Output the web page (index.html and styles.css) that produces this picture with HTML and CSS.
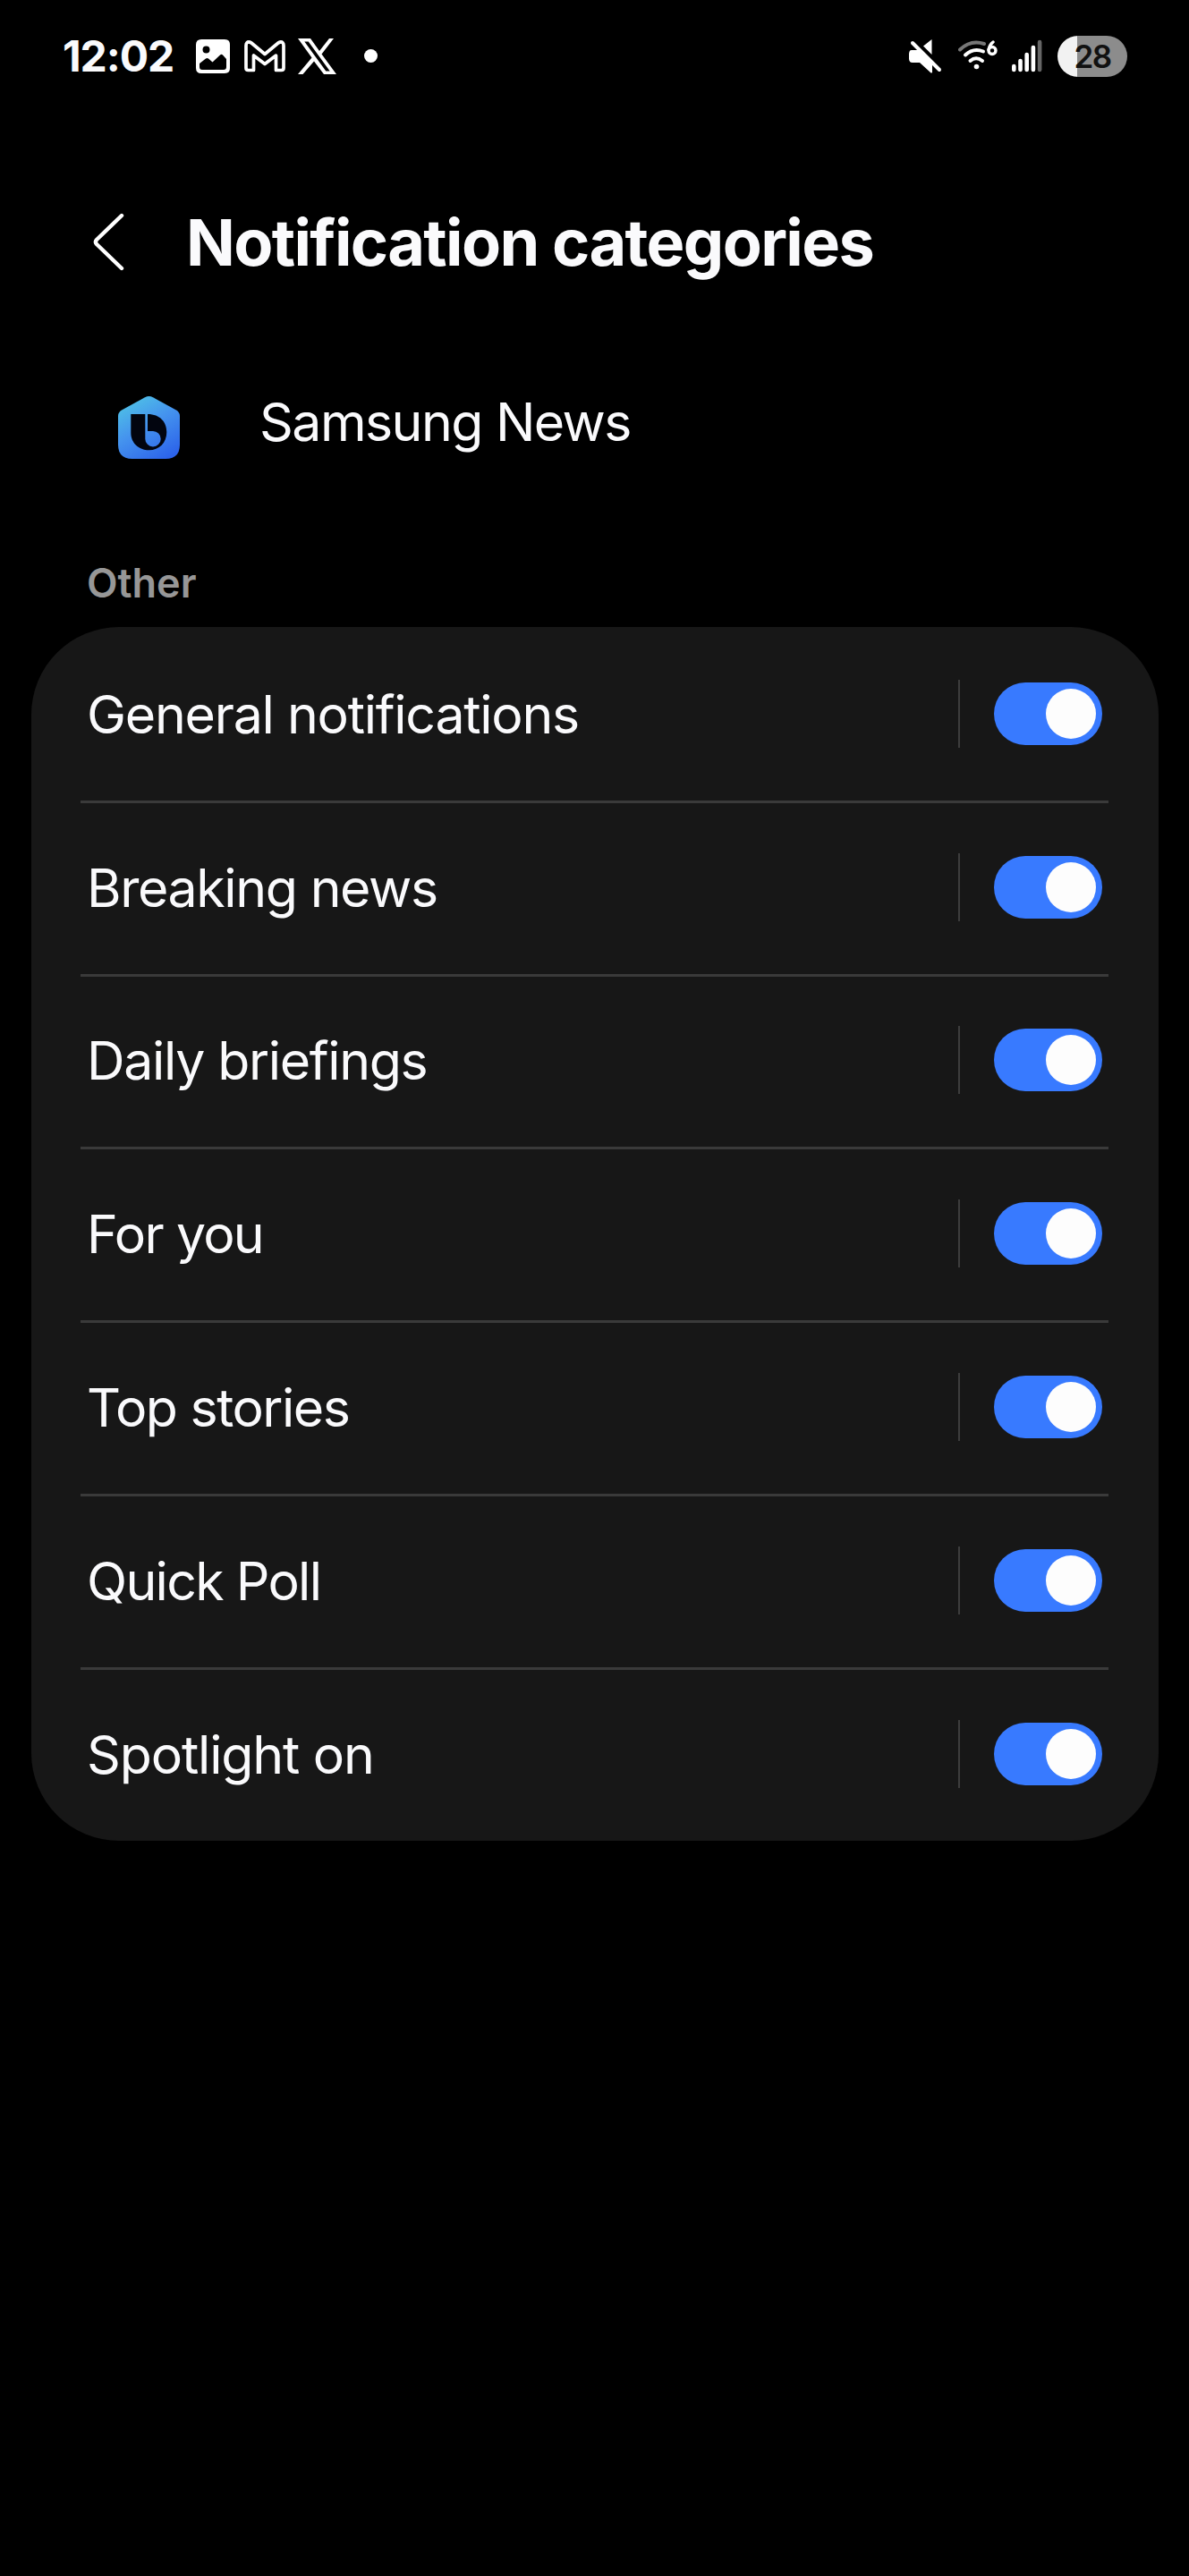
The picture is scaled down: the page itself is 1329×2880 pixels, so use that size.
FILE: index.html
```html
<!DOCTYPE html>
<html lang="en">
<head>
<meta charset="utf-8">
<title>Notification categories</title>
<link rel="stylesheet" href="styles.css">
</head>
<body>
<header class="status">
  <span class="clock">12:02</span>
  <svg class="ic-photo" width="38" height="38" viewBox="0 0 38 38"><path fill="#fff" fill-rule="evenodd" d="M6 0H32Q38 0 38 6V32Q38 38 32 38H6Q0 38 0 32V6Q0 0 6 0ZM11.500 7.500A4 4 0 1 0 11.500 15.500A4 4 0 1 0 11.500 7.500ZM4 27V31Q4 34 7 34H31Q34 34 34 31V22L30 17.500Q28.500 16 27 17.500L18.500 25.500L14 21.500Q12.500 20.500 11 21.500Z"/></svg>
  <svg class="ic-mail" width="46" height="36" viewBox="0 0 46 36"><path fill="none" stroke="#fff" stroke-width="3.700" stroke-linejoin="round" d="M2 6Q2 1.500 6 2L8 3L23 15.500L38 3L40 2Q44 1.500 44 6V31Q44 33.500 41.500 33.500H35.500V17L23 26.500L10.500 17V33.500H4.500Q2 33.500 2 31Z"/></svg>
  <svg class="ic-x" width="43" height="40" viewBox="0 0 43 40"><path fill="#fff" fill-rule="evenodd" d="M0 0H14L24 14L35 0H40L26.500 17.500L43 40H29L18 25.500L5.500 40H0L15.500 21.500ZM7.300 3.600L31.300 36.400H35.700L11.700 3.600Z"/></svg>
  <span class="dot"></span>
  <span class="fill"></span>
  <svg class="ic-mute" width="38" height="38" viewBox="0 0 38 38"><path fill="#fff" d="M25.500 0V17L16 7.500Z"/><path fill="#fff" d="M3 12H10L26 28V37Q25 38 24 37L12 26H4Q0 26 0 22V16Q0 12 3 12Z"/><path stroke="#fff" stroke-width="4" stroke-linecap="round" d="M4 4L34 34"/></svg>
  <svg class="ic-wifi" width="46" height="36" viewBox="0 0 46 36"><g fill="none" stroke="#fff" stroke-width="4" stroke-linecap="round"><path stroke="#777" d="M2 10.500Q14 -1 29 4"/><path d="M8 16.500Q17 8 28 12.500"/><path d="M13.500 23Q20 17.500 27 23"/></g><circle cx="20.500" cy="29.500" r="2.800" fill="#fff"/><circle cx="38" cy="11.500" r="4" fill="none" stroke="#fff" stroke-width="3.400"/><path d="M34 10.500Q35 5 39 2" fill="none" stroke="#fff" stroke-width="3.400" stroke-linecap="round"/></svg>
  <svg class="ic-signal" width="34" height="37" viewBox="0 0 34 37"><g stroke="#fff" stroke-width="4.600" stroke-linecap="round"><path d="M2.300 30V34M9.500 24V34M16.700 17V34M23.900 9V34"/><path stroke="#666" d="M31.100 3V34"/></g></svg>
  <span class="battery">28</span>
</header>
<main>
  <div class="title-bar">
    <svg class="back" width="36" height="66" viewBox="0 0 36 66"><path fill="none" stroke="#fff" stroke-width="4.400" stroke-linecap="round" stroke-linejoin="round" d="M32 3L4 30Q1.800 32.500 4 35L32 62"/></svg>
    <h1>Notification categories</h1>
  </div>
  <div class="app">
    <svg class="app-icon" width="69" height="70" viewBox="0 0 69 70"><defs><linearGradient id="g" x1="0.200" y1="0" x2="0.800" y2="1"><stop offset="0" stop-color="#4fc3e6"/><stop offset=".45" stop-color="#4594ee"/><stop offset="1" stop-color="#2c63ea"/></linearGradient></defs><path fill="url(#g)" d="M30 1.200Q34.500 -1 39 1.200L65 15.500Q69 18 69 22V54Q69 70 53 70H16Q0 70 0 54V22Q0 18 4 15.500Z"/><path fill="#02050f" d="M14.300 20H30.300V47.700A8.700 8.700 0 1 0 39 39H33V20C47 20 54.300 29 54.300 40C54.300 52 46 60.300 34.500 60.300C23 60.300 14.300 52 14.300 41Z"/></svg>
    <span class="app-name">Samsung News</span>
  </div>
  <h2>Other</h2>
  <ul class="card">
    <li><span class="label general">General notifications</span><span class="split"></span><span class="toggle"></span></li>
    <li><span class="label breaking">Breaking news</span><span class="split"></span><span class="toggle"></span></li>
    <li><span class="label daily">Daily briefings</span><span class="split"></span><span class="toggle"></span></li>
    <li><span class="label foryou">For you</span><span class="split"></span><span class="toggle"></span></li>
    <li><span class="label top">Top stories</span><span class="split"></span><span class="toggle"></span></li>
    <li><span class="label poll">Quick Poll</span><span class="split"></span><span class="toggle"></span></li>
    <li><span class="label spotlight">Spotlight on</span><span class="split"></span><span class="toggle"></span></li>
  </ul>
</main>
</body>
</html>
```
FILE: styles.css
```css
* { box-sizing: border-box; }
body { margin: 0; min-height: 2880px; background: #000; color: #fafafc; font-family: Inter, "Noto Sans", sans-serif; }
svg { display: block; flex: none; }
.status { display: flex; align-items: center; height: 125px; padding: 0 69px 0 70px; }
.clock { width: 149px; font-size: 48px; font-weight: 700; letter-spacing: -1.1px; white-space: nowrap; }
.ic-mail { margin-left: 16px; }
.ic-x { margin-left: 14px; }
.dot { width: 15px; height: 15px; margin-left: 31px; border-radius: 50%; background: #fff; }
.fill { flex: 1; }
.ic-wifi { margin: 0 14px 0 17px; }
.ic-signal { margin-right: 17px; }
.battery { width: 78px; height: 46px; border-radius: 23px; background: linear-gradient(90deg, #f2f2f2 22px, #8c8c8c 22px); color: #111; font-size: 35px; font-weight: 600; letter-spacing: -1.5px; line-height: 46px; text-align: center; }
.title-bar { display: flex; align-items: center; height: 90px; margin-top: 101px; padding-left: 104px; }
.back { margin-top: -1px; }
h1 { margin: 0 0 0 68px; font-size: 72px; line-height: 90px; font-weight: 700; letter-spacing: -1.65px; white-space: nowrap; }
.app { display: flex; align-items: center; height: 80px; margin-top: 122px; padding-left: 132px; }
.app-name { margin: -13px 0 0 89px; font-size: 59px; letter-spacing: -1.55px; }
h2 { margin: 104px 0 0 97px; height: 60px; line-height: 60px; font-size: 45px; font-weight: 600; color: #979797; }
.card { margin: 16px 34px 0 35px; padding: 0; list-style: none; background: #171717; border-radius: 98px; height: 1356.6px; }
h2 + .card { margin-top: 19px; }
.card li { display: flex; align-items: center; height: 193.8px; margin: 0 56px 0 55px; padding: 0 7px 0 7px; }
.card li + li { background: linear-gradient(#3a3a3a, #3a3a3a) 0 0 / 100% 3px no-repeat; }
.label { flex: 1; padding-top: 2px; font-size: 59px; line-height: 72px; letter-spacing: -1.25px; white-space: nowrap; }
.breaking { letter-spacing: -1.4px; }
.daily { letter-spacing: -1.35px; }
.foryou { letter-spacing: -1.7px; }
.top { letter-spacing: -1.5px; }
.poll { letter-spacing: -1.7px; }
.spotlight { letter-spacing: -1.15px; }
.split { width: 2px; height: 76px; margin-right: 38px; background: #3d3d3d; }
.toggle { width: 121px; height: 70px; padding: 7px; border-radius: 35px; background: #387aff; display: flex; justify-content: flex-end; }
.toggle::before { content: ""; width: 56px; height: 56px; border-radius: 50%; background: #fdfdfd; }
```
